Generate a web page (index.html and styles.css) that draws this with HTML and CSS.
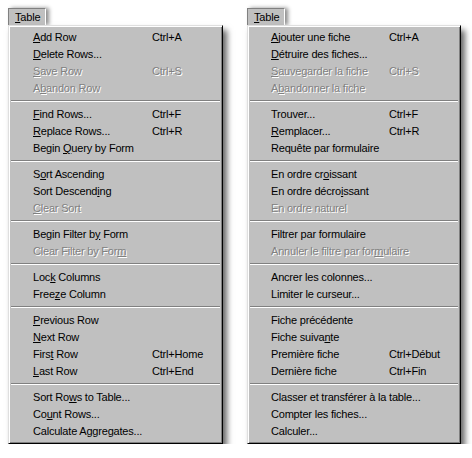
FILE: index.html
```html
<!DOCTYPE html>
<html lang="en">
<head>
    <meta charset="UTF-8">
    <title>Table menu</title>

    <link rel="stylesheet" href="styles.css">
</head>
<body>
    <div class="screen">
        <!-- english menu -->
        <div class="menuWrap en">
            <div class="tab"><u>T</u>able</div>
            <div class="menu">
                <div class="item"><span class="label"><u>A</u>dd Row</span><span class="key">Ctrl+A</span></div>
                <div class="item"><span class="label"><u>D</u>elete Rows...</span></div>
                <div class="item off"><span class="label"><u>S</u>ave Row</span><span class="key">Ctrl+S</span></div>
                <div class="item off"><span class="label">A<u>b</u>andon Row</span></div>
                <div class="sep"></div>
                <div class="item"><span class="label"><u>F</u>ind Rows...</span><span class="key">Ctrl+F</span></div>
                <div class="item"><span class="label"><u>R</u>eplace Rows...</span><span class="key">Ctrl+R</span></div>
                <div class="item"><span class="label">Begin <u>Q</u>uery by Form</span></div>
                <div class="sep"></div>
                <div class="item"><span class="label">S<u>o</u>rt Ascending</span></div>
                <div class="item"><span class="label">Sort Descend<u>i</u>ng</span></div>
                <div class="item off"><span class="label"><u>C</u>lear Sort</span></div>
                <div class="sep"></div>
                <div class="item"><span class="label">Begin Filter b<u>y</u> Form</span></div>
                <div class="item off"><span class="label">Clear Filter by For<u>m</u></span></div>
                <div class="sep"></div>
                <div class="item"><span class="label">Loc<u>k</u> Columns</span></div>
                <div class="item"><span class="label">Free<u>z</u>e Column</span></div>
                <div class="sep"></div>
                <div class="item"><span class="label"><u>P</u>revious Row</span></div>
                <div class="item"><span class="label"><u>N</u>ext Row</span></div>
                <div class="item"><span class="label">Firs<u>t</u> Row</span><span class="key">Ctrl+Home</span></div>
                <div class="item"><span class="label"><u>L</u>ast Row</span><span class="key">Ctrl+End</span></div>
                <div class="sep"></div>
                <div class="item"><span class="label">Sort Ro<u>w</u>s to Table...</span></div>
                <div class="item"><span class="label">Co<u>u</u>nt Rows...</span></div>
                <div class="item"><span class="label">Calculate Aggregates...</span></div>
            </div>
        </div>

        <!-- french menu -->
        <div class="menuWrap fr">
            <div class="tab"><u>T</u>able</div>
            <div class="menu">
                <div class="item"><span class="label"><u>A</u>jouter une fiche</span><span class="key">Ctrl+A</span></div>
                <div class="item"><span class="label"><u>D</u>étruire des fiches...</span></div>
                <div class="item off"><span class="label"><u>S</u>auvegarder la fiche</span><span class="key">Ctrl+S</span></div>
                <div class="item off"><span class="label">A<u>b</u>andonner la fiche</span></div>
                <div class="sep"></div>
                <div class="item"><span class="label">Trouver...</span><span class="key">Ctrl+F</span></div>
                <div class="item"><span class="label"><u>R</u>emplacer...</span><span class="key">Ctrl+R</span></div>
                <div class="item"><span class="label">Requête par formulaire</span></div>
                <div class="sep"></div>
                <div class="item"><span class="label">En ordre cr<u>o</u>issant</span></div>
                <div class="item"><span class="label">En ordre décro<u>i</u>ssant</span></div>
                <div class="item off"><span class="label">En ordre naturel</span></div>
                <div class="sep"></div>
                <div class="item"><span class="label">Filtrer par formulaire</span></div>
                <div class="item off"><span class="label">Annuler le filtre par for<u>m</u>ulaire</span></div>
                <div class="sep"></div>
                <div class="item"><span class="label">Ancrer les colonnes...</span></div>
                <div class="item"><span class="label">Limiter le curseur...</span></div>
                <div class="sep"></div>
                <div class="item"><span class="label">Fiche précédente</span></div>
                <div class="item"><span class="label">Fiche suiva<u>n</u>te</span></div>
                <div class="item"><span class="label">Première fiche</span><span class="key">Ctrl+Début</span></div>
                <div class="item"><span class="label">Dernière fiche</span><span class="key">Ctrl+Fin</span></div>
                <div class="sep"></div>
                <div class="item"><span class="label">Classer et transférer à la table...</span></div>
                <div class="item"><span class="label">Compter les fiches...</span></div>
                <div class="item"><span class="label">Calculer...</span></div>
            </div>
        </div>
    </div>
</body>
</html>
```

FILE: styles.css
```css
body {
    margin: 0;
    background: #fff;
    font: 11px "Liberation Sans", Arial, sans-serif;
    letter-spacing: -0.2px;
    color: #000;
}

.screen {
    display: flex;
    gap: 24px;
    padding: 8px 0 0 8px;
}

.menuWrap {
    display: flex;
    flex-direction: column;
    align-items: flex-start;
}

/* pressed menu bar button */
.tab {
    height: 16px;
    line-height: 16px;
    padding: 0 5px 0 6px;
    background: #c0c0c0;
    border-top: 1px solid #808080;
    border-left: 1px solid #808080;
    border-right: 1px solid #fff;
    box-shadow: 3px 0 4px rgba(0, 0, 0, 0.45);
    position: relative;
    z-index: 1;
}

.menu {
    background: #c0c0c0;
    border-top: 1px solid #dfdfdf;
    border-left: 1px solid #dfdfdf;
    border-right: 1px solid #000;
    border-bottom: 1px solid #000;
    box-shadow: inset 1px 1px 0 #fff, inset -1px -1px 0 #808080, 4px 5px 6px rgba(0, 0, 0, 0.6);
    padding: 3px 2px 3px 2px;
    position: relative;
    z-index: 2;
}
.en .menu { width: 209px; }
.fr .menu { width: 208px; }

.item {
    display: grid;
    height: 17px;
    line-height: 17px;
    white-space: nowrap;
}
.en .item { grid-template-columns: 119px auto; padding-left: 22px; }
.fr .item { grid-template-columns: 118px auto; padding-left: 21px; }

.item u { text-decoration-thickness: 1px; text-underline-offset: 1px; }

.off {
    color: #808080;
    text-shadow: 1px 1px 0 #fff;
}

.sep {
    margin: 3px 0 4px;
    border-top: 1px solid #808080;
    border-bottom: 1px solid #fff;
}
```
